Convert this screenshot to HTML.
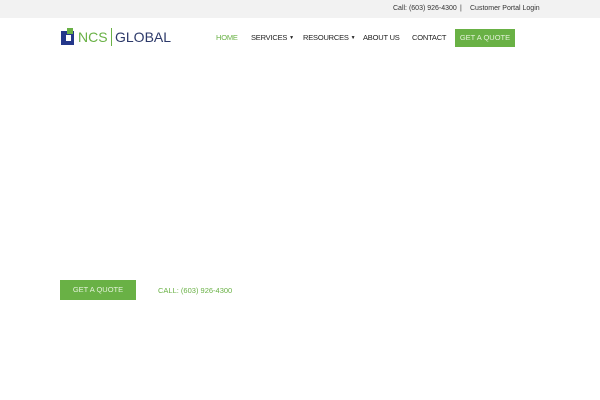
<!DOCTYPE html>
<html><head><style>
body{margin:0;width:600px;height:400px;background:#fff;font-family:"Liberation Sans",sans-serif;position:relative;overflow:hidden}
.top{position:absolute;left:0;top:0;width:600px;height:18px;background:#f2f2f2}
.t{position:absolute;font-size:7px;color:#333;white-space:nowrap;top:5px}
.nav{position:absolute;top:33px;font-size:7.5px;color:#222;white-space:nowrap;letter-spacing:-0.2px}
.btn{position:absolute;background:#69b145;color:#e4f2da;font-size:7.5px;text-align:center}
.c{font-size:5px;vertical-align:1px}
</style></head><body>
<div class="top"></div>
<div class="t" style="left:393px">Call: (603) 926-4300</div>
<div class="t" style="left:460px">|</div>
<div class="t" style="left:470px">Customer Portal Login</div>
<svg style="position:absolute;left:61px;top:27px" width="16" height="20" viewBox="0 0 16 20">
<rect x="0" y="4" width="13" height="14" fill="#24378a"/>
<rect x="5" y="8" width="5" height="6" fill="#fff"/>
<rect x="6" y="1" width="6" height="6" fill="#69b145"/>
</svg>
<div style="position:absolute;left:78px;top:29px;font-size:14px;color:#69b145">NCS</div>
<div style="position:absolute;left:111px;top:28px;width:1px;height:18px;background:#69b145"></div>
<div style="position:absolute;left:115px;top:29px;font-size:14px;color:#2d3a6a">GLOBAL</div>
<div class="nav" style="left:216px;color:#69b145">HOME</div>
<div class="nav" style="left:251px">SERVICES <span class="c">▼</span></div>
<div class="nav" style="left:303px">RESOURCES <span class="c">▼</span></div>
<div class="nav" style="left:363px">ABOUT US</div>
<div class="nav" style="left:412px">CONTACT</div>
<div class="btn" style="left:455px;top:29px;width:60px;height:18px;line-height:18px">GET A QUOTE</div>
<div class="btn" style="left:60px;top:280px;width:76px;height:20px;line-height:20px">GET A QUOTE</div>
<div style="position:absolute;left:158px;top:286px;font-size:7.5px;color:#69b145">CALL: (603) 926-4300</div>
</body></html>
